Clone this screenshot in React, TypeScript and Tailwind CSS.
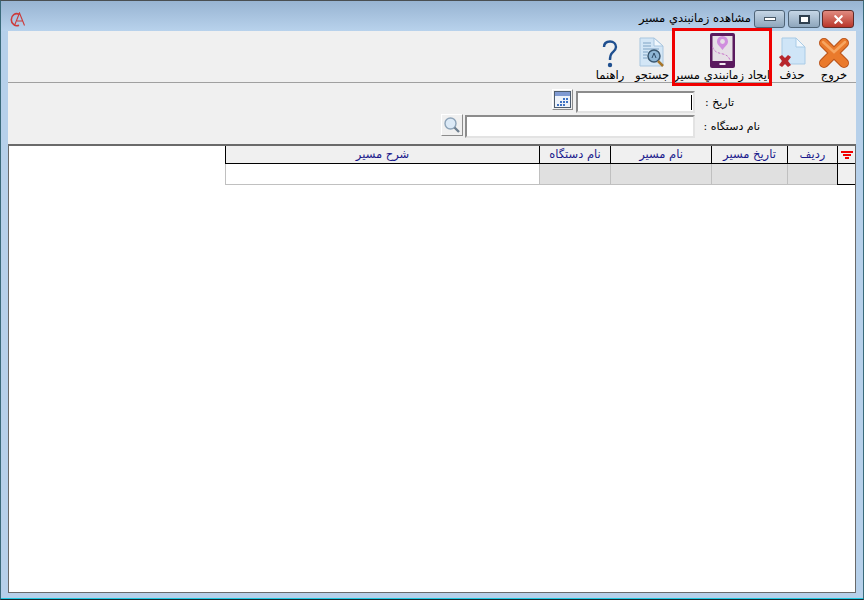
import React from 'react';
import { X } from 'lucide-react';

const font = { fontFamily: '"DejaVu Sans", sans-serif' };

const ToolItem = ({ label, width, icon }: any) => (
  <div className={`flex flex-col items-center justify-start h-full pt-[2px] ${width}`}>
    <div className="h-[35px] flex items-end justify-center">{icon}</div>
    <span dir="rtl" className="text-[11.5px] leading-[13px] mt-[1px] text-black whitespace-nowrap">{label}</span>
  </div>
);

const HelpIcon = () => (
  <svg width="16" height="28" viewBox="0 0 16 28">
    <path d="M2 7 C2 3 5 1.5 8 1.5 C11.5 1.5 14 4 14 7 C14 10 11.5 11.5 10 13 C8.5 14.5 8 16 8 20" fill="none" stroke="#1f4f8f" strokeWidth="2.4" />
    <circle cx="8" cy="25" r="2.2" fill="#1f4f8f" />
  </svg>
);

const ExitIcon = () => (
  <svg width="30" height="30" viewBox="0 0 30 30">
    <path d="M5 5 L25 25 M25 5 L5 25" stroke="#b9531a" strokeWidth="10" strokeLinecap="round" />
    <path d="M5 5 L25 25 M25 5 L5 25" stroke="#ea7a2c" strokeWidth="8" strokeLinecap="round" />
    <path d="M4 4 L15 14 L26 4" fill="none" stroke="#f7a560" strokeWidth="2.5" strokeLinecap="round" />
  </svg>
);

const DeleteIcon = () => (
  <svg width="30" height="31" viewBox="0 0 30 31">
    <path d="M5 1 H19 L28 10 V27 H5 Z" fill="#cfe5f7" stroke="#a9cbe6" />
    <path d="M19 1 V10 H28 Z" fill="#f2f8fd" stroke="#a9cbe6" />
    <path d="M2 20 L5 18 L8 21 L11 18 L14 20 L11 24 L14 28 L11 30 L8 27 L5 30 L2 28 L5 24 Z" fill="#b8262c" />
  </svg>
);

const TabletIcon = () => (
  <svg width="25" height="35" viewBox="0 0 25 35">
    <rect x="0" y="0" width="25" height="35" rx="2" fill="#5a1a5e" />
    <rect x="2.5" y="3" width="20" height="25" fill="#e6e0e6" />
    <rect x="9.5" y="30" width="6" height="2" fill="#f2e9f2" />
    <path d="M12.5 17 C10 13 7 12 7 8.5 A5.5 5.5 0 0 1 18 8.5 C18 12 15 13 12.5 17 Z" fill="#d08ede" />
    <circle cx="12.5" cy="8.5" r="2.4" fill="#e6e0e6" />
    <path d="M2.5 14 C5 20 9 20 13 21 C17 22 19 24 20 27" fill="none" stroke="#c872c8" strokeWidth="1" strokeDasharray="2.5 1.5" />
  </svg>
);

const SearchDocIcon = () => (
  <svg width="26" height="31" viewBox="0 0 26 31">
    <path d="M1 1 H15 L24 9 V29 H1 Z" fill="#d3e6f6" stroke="#a9c6df" />
    <path d="M15 1 V9 H24 Z" fill="#f2f8fd" stroke="#a9c6df" />
    <path d="M4 6 H12 M4 9 H12 M4 12 H20 M4 15 H9 M4 18 H8 M4 21 H8" stroke="#7fa3c4" strokeWidth="1" />
    <circle cx="15" cy="19" r="6" fill="#8eb6d6" stroke="#39566f" strokeWidth="1.5" />
    <path d="M13 21 L15 16 L17 21" fill="none" stroke="#2e4a66" strokeWidth="1" />
    <path d="M19 24 L24 29" stroke="#a8762a" strokeWidth="2.5" />
  </svg>
);

const SmallMagnifier = () => (
  <svg width="18" height="18" viewBox="0 0 18 18">
    <circle cx="7.5" cy="7.5" r="5.5" fill="#dbe9f6" stroke="#8da3b8" strokeWidth="1.4" />
    <path d="M11.5 11.5 L16 16" stroke="#6e7f8f" strokeWidth="2.4" />
  </svg>
);

const CalendarIcon = () => (
  <svg width="17" height="17" viewBox="0 0 17 17">
    <rect x="0.5" y="0.5" width="16" height="16" fill="#eef3fa" stroke="#4d5c6e" />
    <rect x="1" y="1" width="15" height="4" fill="#7f9ad2" />
    <path d="M9 7 h2 v2 h-2 Z M12 7 h2 v2 h-2 Z M6 10 h2 v2 h-2 Z M9 10 h2 v2 h-2 Z M12 10 h2 v2 h-2 Z M3 13 h2 v2 h-2 Z M6 13 h2 v2 h-2 Z M9 13 h2 v2 h-2 Z" fill="#3f73c4" />
  </svg>
);

const Logo = () => (
  <svg width="17" height="15" viewBox="0 0 17 15">
    <path d="M9 2.2 A5.5 6 0 1 0 9 13.2" fill="none" stroke="#cc3b3b" strokeWidth="1.6" />
    <path d="M4.5 13.5 L9.5 1 L14.5 13.5 M7 9 H12.5" fill="none" stroke="#cc3b3b" strokeWidth="1.1" />
  </svg>
);

const Sunken = ({ className, children }: any) => (
  <div className={`bg-white border-2 border-t-[#8c8c8c] border-l-[#8c8c8c] border-r-[#e3e3e3] border-b-[#e3e3e3] ${className}`}>{children}</div>
);

const Raised = ({ className, children }: any) => (
  <div className={`flex items-center justify-center bg-[#f0f0f0] border border-t-white border-l-white border-r-[#8c8c8c] border-b-[#8c8c8c] ${className}`}>{children}</div>
);

const columns = [
  { label: 'نام دستگاه', width: 'w-[71px]' },
  { label: 'نام مسیر', width: 'w-[101px]' },
  { label: 'تاریخ مسیر', width: 'w-[76px]' },
  { label: 'ردیف', width: 'w-[50px]' },
];

export default function App() {
  return (
    <div style={font} className="w-[864px] h-[600px] overflow-hidden flex flex-col bg-[#b6d0ea] border-l border-r border-[#3a6a7a] border-t border-t-[#4a4f52] border-b border-b-[#1a2a30]">
      {/* title bar */}
      <div className="h-[30px] shrink-0 flex items-center justify-between pt-[6px] pl-[9px] pr-[9px] bg-gradient-to-b from-[#98b4d2] to-[#b8d2ec]">
        <Logo />
        <div className="flex items-center">
          <span dir="rtl" className="text-[11.5px] text-black mr-[3px] whitespace-nowrap">مشاهده زمانبندي مسير</span>
          <div className="w-[31px] h-[18px] rounded-[3px] border border-[#4f6477] bg-gradient-to-b from-[#c6d6e6] to-[#8ea6bc] flex items-center justify-center">
            <div className="w-[12px] h-[4px] bg-white border border-[#4a5a68]" />
          </div>
          <div className="w-[32px] h-[18px] ml-[3px] rounded-[3px] border border-[#4f6477] bg-gradient-to-b from-[#c6d6e6] to-[#8ea6bc] flex items-center justify-center">
            <div className="w-[11px] h-[9px] border-2 border-[#30404f] bg-white" />
          </div>
          <div className="w-[32px] h-[18px] ml-[2px] rounded-[3px] border border-[#5e2a28] bg-gradient-to-b from-[#e08a80] to-[#b8342a] flex items-center justify-center">
            <X size={13} strokeWidth={4} className="text-white" />
          </div>
        </div>
      </div>

      {/* client area */}
      <div className="mx-[7px] mb-[5px] flex-1 flex flex-col bg-[#f0f0f0] min-h-0">
        {/* toolbar */}
        <div className="relative h-[52px] shrink-0 flex justify-end border-b border-[#a0a0a0] pr-[1px]">
          <ToolItem label="راهنما" width="w-[42px]" icon={<HelpIcon />} />
          <ToolItem label="جستجو" width="w-[42px]" icon={<SearchDocIcon />} />
          <ToolItem label="ايجاد زمانبندي مسير" width="w-[98px]" icon={<TabletIcon />} />
          <ToolItem label="حذف" width="w-[42px]" icon={<DeleteIcon />} />
          <ToolItem label="خروج" width="w-[42px]" icon={<ExitIcon />} />
          <div className="absolute left-[664px] top-[-3px] w-[100px] h-[58px] border-[3px] border-[#f00000]" />
        </div>

        {/* filter form */}
        <div className="h-[61px] shrink-0 flex flex-col pt-[6px] pr-[96px] items-end">
          <div className="flex items-start h-[25px]" dir="ltr">
            <Raised className="w-[21px] h-[21px] mr-[3px]"><CalendarIcon /></Raised>
            <Sunken className="w-[119px] h-[22px] mt-[2px] flex justify-end items-center pr-[1px]"><div className="w-px h-[15px] bg-black" /></Sunken>
            <span dir="rtl" className="w-[55px] ml-[10px] mt-[6px] text-left text-[11px] leading-[16px] text-black whitespace-nowrap">تاریخ :</span>
          </div>
          <div className="flex items-start h-[24px]" dir="ltr">
            <Raised className="w-[22px] h-[22px] mr-[2px]"><SmallMagnifier /></Raised>
            <Sunken className="w-[230px] h-[23px] mt-[1px]" />
            <span dir="rtl" className="w-[55px] ml-[10px] mt-[5px] text-left text-[11px] leading-[16px] text-black whitespace-nowrap">نام دستگاه :</span>
          </div>
        </div>

        {/* grid */}
        <div className="flex-1 bg-white border border-[#6a6a6a] border-t-2 min-h-0 pl-[216px]">
          <div className="flex h-[18px] border-b border-black">
            <div className="w-[314px] flex items-center justify-center border-l border-black bg-[#f0f0f0] text-[11.5px] text-[#1a1a8c]" dir="rtl">شرح مسیر</div>
            {columns.map(col => (
              <div key={col.label} className={`${col.width} flex items-center justify-center border-l border-black bg-[#f0f0f0] text-[11.5px] text-[#1a1a8c] whitespace-nowrap`} dir="rtl">{col.label}</div>
            ))}
            <div className="flex-1 flex flex-col items-center justify-center gap-[1px] border-l border-black bg-[#f0f0f0]">
              <div className="w-[12px] h-[2px] bg-[#f00000]" />
              <div className="w-[8px] h-[2px] bg-[#f00000]" />
              <div className="w-[4px] h-[2px] bg-[#f00000]" />
            </div>
          </div>
          <div className="flex h-[21px]">
            <div className="w-[314px] bg-white border-l border-b border-[#c0c0c0]" />
            {columns.map(col => (
              <div key={col.label} className={`${col.width} bg-[#e0e0e0] border-l border-b border-[#c0c0c0]`} />
            ))}
            <div className="flex-1 bg-[#f0f0f0] border-l border-b border-black" />
          </div>
        </div>
      </div>
      <div className="h-px shrink-0 bg-[#1fc8e0]" />
    </div>
  );
}
